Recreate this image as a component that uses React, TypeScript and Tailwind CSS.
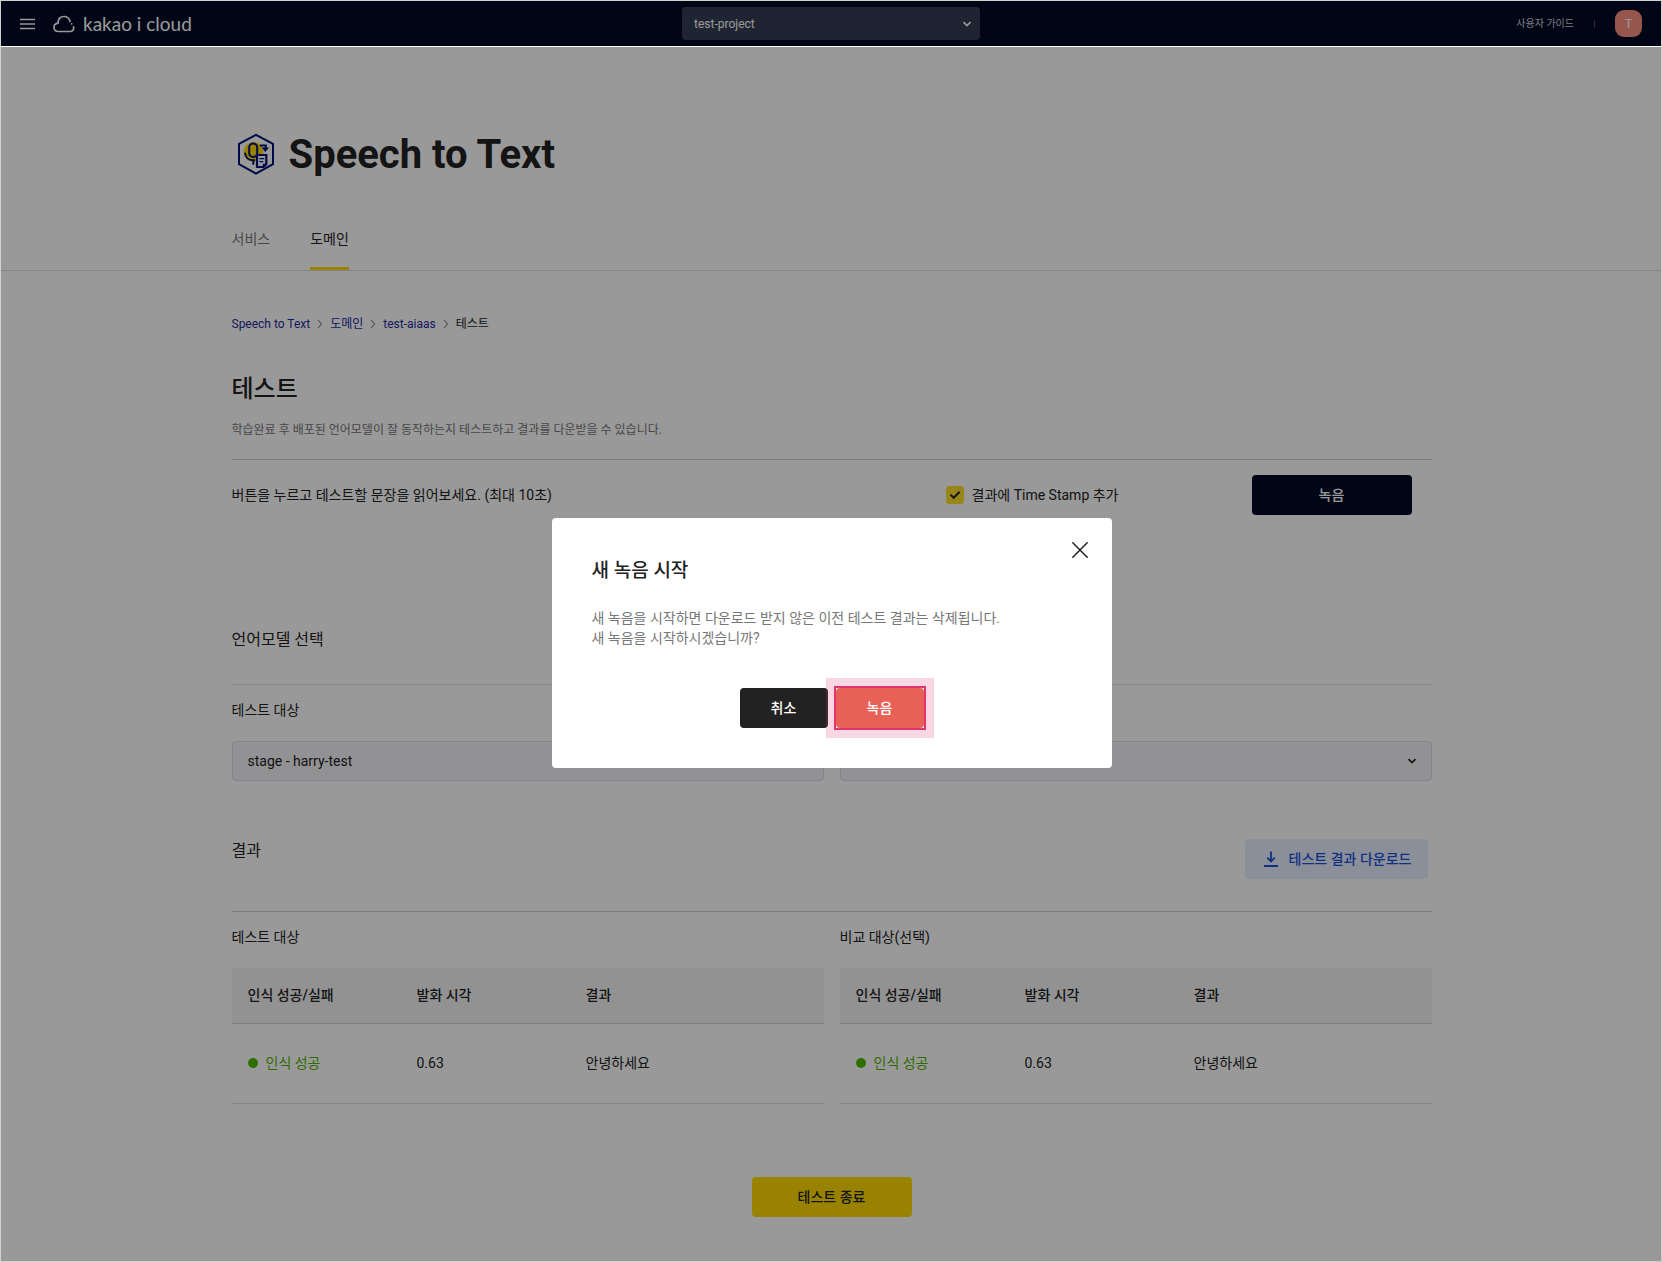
import React from "react";

const sans = "font-[Roboto,'Noto_Sans_CJK_KR',sans-serif]";

function Chevron({ className }: { className: string }) {
  return (
    <svg viewBox="0 0 10 10" className={className} fill="none" stroke="currentColor" strokeWidth="1.7" aria-hidden="true">
      <path d="M1.5 3.2 5 6.600l3.500-3.400" />
    </svg>
  );
}

function SpeechIcon() {
  return (
    <svg viewBox="1 3.5 48 48" className="size-12" fill="none" stroke="#00127a" aria-hidden="true">
      <path d="M25 8.300 42 17.400v20.200L25 47.100 8 37.600V17.400z" strokeWidth="2" />
      <circle cx="22.600" cy="25.400" r="9.900" fill="#ffd900" stroke="none" />
      <rect x="18.200" y="17" width="8" height="13.400" rx="4" strokeWidth="2" />
      <path d="M14 26.200c.3 4.600 3.600 7.600 8.300 7.600h1.700M22.300 33.800v4.400" strokeWidth="2" />
      <path d="M28.800 19h6v3" strokeWidth="2" />
      <path d="M30.500 21h7.600l-3.800 4.500z" fill="#00127a" stroke="none" />
      <path d="M26 28.500h9.300v9.200l-2.800 2.800H26z" fill="#fff" strokeWidth="2.200" />
      <path d="M28.300 32.200h5M28.300 35.200h4" strokeWidth="1.300" />
      <path d="M31.800 41v-3.800h4z" fill="#00127a" stroke="none" />
    </svg>
  );
}

function Header() {
  return (
    <header className="grid h-[45px] grid-cols-[1fr_auto_1fr] items-center bg-[#000b24] px-5 text-white">
      <div className="flex items-center gap-[18px]">
        <button aria-label="메뉴">
          <svg viewBox="0 0 15 12" className="block h-3 w-[15px]" stroke="currentColor" strokeWidth="1.300" aria-hidden="true">
            <path d="M0 1.500h15M0 6h15M0 10.500h15" />
          </svg>
        </button>
        <a href="#home" className="flex items-center gap-2">
          <svg viewBox="0 0 22 18" className="h-[18px] w-[22px]" fill="none" stroke="currentColor" strokeWidth="1.700" strokeLinecap="round" aria-hidden="true">
            <path d="M20.600 11.800c.5 2.700-1 4.700-3.600 4.700H5.300C2.800 16.500 1 14.800 1 12.300c0-2.300 1.500-3.800 4-4.200C5.200 4 7.700 1.500 11 1.500c3.200 0 5.400 1.900 6 5" />
            <path d="M18.700 8.800h.05" />
          </svg>
          <span className="font-[Lato,sans-serif] text-[19px] leading-5">kakao i cloud</span>
        </a>
      </div>
      <div className="relative w-[298px]">
        <select
          aria-label="프로젝트"
          className="block h-[33px] w-full appearance-none rounded bg-[#343d54] px-3 text-xs text-white"
        >
          <option>test-project</option>
        </select>
        <Chevron className="pointer-events-none absolute top-3 right-2 size-[10px]" />
      </div>
      <div className="flex items-center justify-end gap-5">
        <a href="#guide" className="text-[10px] text-[#d0d3da]">사용자 가이드</a>
        <span className="h-2 w-px bg-[#454c5e]" />
        <button className="size-[27px] rounded-[9px] bg-[#fa9082] text-xs">T</button>
      </div>
    </header>
  );
}

function Separator() {
  return (
    <svg viewBox="0 0 6 10" className="h-[10px] w-[6px]" fill="none" stroke="#999" strokeWidth="1.200" aria-hidden="true">
      <path d="m1 .8 3.600 4.200L1 9.200" />
    </svg>
  );
}

function ModelSelect({ id, label, value }: { id: string; label: string; value: string }) {
  return (
    <div>
      <label htmlFor={id} className="block text-sm">{label}</label>
      <div className="relative mt-[21px]">
        <select
          id={id}
          className="block h-10 w-full appearance-none rounded border border-[#dadce8] bg-[#f4f4f8] px-[15px] text-sm"
        >
          <option>{value}</option>
        </select>
        <Chevron className="pointer-events-none absolute top-[15px] right-[15px] size-[10px]" />
      </div>
    </div>
  );
}

function ResultTable({ label }: { label: string }) {
  return (
    <section>
      <h3 className="text-sm">{label}</h3>
      <table className="mt-[21px] w-full table-fixed text-left text-sm">
        <colgroup>
          <col className="w-[169px]" />
          <col className="w-[169px]" />
          <col />
        </colgroup>
        <thead>
          <tr className="h-[55px] border-b border-[#d2d2d2] bg-[#f4f4f4]">
            <th className="px-4 font-medium">인식 성공/실패</th>
            <th className="px-4 font-medium">발화 시각</th>
            <th className="px-4 font-medium">결과</th>
          </tr>
        </thead>
        <tbody>
          <tr className="h-20 border-b border-[#dedede]">
            <td className="px-4 text-[#4fb300]">
              <span className="flex items-center gap-2">
                <span className="size-[10px] rounded-full bg-[#4fb800]" />
                인식 성공
              </span>
            </td>
            <td className="px-4">0.63</td>
            <td className="px-4">안녕하세요</td>
          </tr>
        </tbody>
      </table>
    </section>
  );
}

function RecordDialog() {
  return (
    <div className="fixed inset-0 z-10 flex items-center justify-center bg-black/40 pt-6 pl-px">
      <div role="dialog" aria-modal="true" aria-labelledby="dialog-title" className="relative w-[560px] rounded bg-white px-10 pt-[39px] pb-10">
        <button aria-label="닫기" className="absolute top-6 right-6">
          <svg viewBox="0 0 16 16" className="block size-4" stroke="#222" strokeWidth="1.500" strokeLinecap="round" aria-hidden="true">
            <path d="m.8.8 14.400 14.400M15.200.8.8 15.200" />
          </svg>
        </button>
        <h2 id="dialog-title" className="text-[19px] leading-7 font-medium">새 녹음 시작</h2>
        <p className="mt-[23px] text-sm leading-5 text-[#777]">
          새 녹음을 시작하면 다운로드 받지 않은 이전 테스트 결과는 삭제됩니다.
          <br />새 녹음을 시작하시겠습니까?
        </p>
        <div className="mt-10 flex justify-center gap-2">
          <button className="h-10 w-[88px] rounded bg-[#222] text-sm font-medium text-white">취소</button>
          <div className="relative">
            <button className="block h-10 w-[88px] rounded bg-[#e86056] text-sm font-medium text-white">녹음</button>
            <span className="pointer-events-none absolute -inset-0.5 border-2 border-[#e0366c] shadow-[0_0_0_8px_rgba(224,54,108,0.2)]" />
          </div>
        </div>
      </div>
    </div>
  );
}

export default function App() {
  return (
    <div className={`${sans} min-h-screen bg-white pt-px text-[#222]`}>
      <Header />
      <div className="relative z-20 h-px bg-white" />

      <main className="pb-11 pl-px">
        <div className="border-b border-[#dcdcdc]">
          <div className="mx-auto max-w-[1200px] pt-[82px]">
            <div className="flex items-center gap-[9px]">
              <SpeechIcon />
              <h1 className="pt-0.5 text-[40px] leading-12 font-bold">Speech to Text</h1>
            </div>
            <nav className="mt-[50px] flex gap-10 text-sm">
              <a href="#service" className="h-[41px] text-[#777]">서비스</a>
              <a href="#domain" className="h-[41px] border-b-[3px] border-[#ffd900]">도메인</a>
            </nav>
          </div>
        </div>

        <div className="mx-auto max-w-[1200px]">
          <nav aria-label="경로" className="mt-[43px] flex items-center gap-[7px] text-xs leading-5">
            <a href="#stt" className="text-[#262b9c]">Speech to Text</a>
            <Separator />
            <a href="#domains" className="text-[#262b9c]">도메인</a>
            <Separator />
            <a href="#aiaas" className="text-[#262b9c]">test-aiaas</a>
            <Separator />
            <span>테스트</span>
          </nav>

          <h2 className="mt-[39px] text-2xl leading-8 font-medium">테스트</h2>
          <p className="mt-[15px] text-xs leading-5 text-[#777]">
            학습완료 후 배포된 언어모델이 잘 동작하는지 테스트하고 결과를 다운받을 수 있습니다.
          </p>

          <div className="mt-[19px] flex items-center border-t border-[#d2d2d2] pt-[15px] pr-5 text-sm">
            <p className="flex-1">버튼을 누르고 테스트할 문장을 읽어보세요. (최대 10초)</p>
            <label className="flex items-center gap-2">
              <span className="relative flex">
                <input type="checkbox" defaultChecked className="size-[18px] appearance-none rounded-[3px] bg-[#ffe02a]" />
                <svg viewBox="0 0 18 18" className="pointer-events-none absolute inset-0 size-[18px]" fill="none" stroke="#222" strokeWidth="2" aria-hidden="true">
                  <path d="m4.500 8.600 3.200 3.200 6-6" />
                </svg>
              </span>
              결과에 Time Stamp 추가
            </label>
            <button className="ml-[133px] h-10 w-40 rounded bg-[#000b24] font-medium text-white">녹음</button>
          </div>

          <h2 className="mt-[113px] text-base leading-6">언어모델 선택</h2>
          <div className="mt-8 grid grid-cols-2 gap-4 border-t border-[#dcdcdc] pt-[15px]">
            <ModelSelect id="target" label="테스트 대상" value="stage - harry-test" />
            <ModelSelect id="compare" label="비교 대상(선택)" value="" />
          </div>

          <div className="mt-[58px] flex items-start justify-between pr-1">
            <h2 className="text-base leading-6">결과</h2>
            <button className="flex h-10 items-center gap-2 rounded bg-[#e7efff] px-4 text-sm font-medium text-[#1e50d8]">
              <svg viewBox="0 0 20 20" className="size-5" fill="none" stroke="currentColor" strokeWidth="1.800" aria-hidden="true">
                <path d="M3 17h14M10 2.500v9.500M6.200 8.700l3.800 3.800 3.800-3.800" />
              </svg>
              테스트 결과 다운로드
            </button>
          </div>
          <div className="mt-8 grid grid-cols-2 gap-4 border-t border-[#d2d2d2] pt-[15px]">
            <ResultTable label="테스트 대상" />
            <ResultTable label="비교 대상(선택)" />
          </div>

          <div className="mt-[73px] flex justify-center">
            <button className="h-10 w-40 rounded bg-[#ffd900] text-sm font-medium">테스트 종료</button>
          </div>
        </div>
      </main>

      <RecordDialog />
      <div className="pointer-events-none fixed inset-0 z-30 border border-[#ccd3d1]" />
    </div>
  );
}
